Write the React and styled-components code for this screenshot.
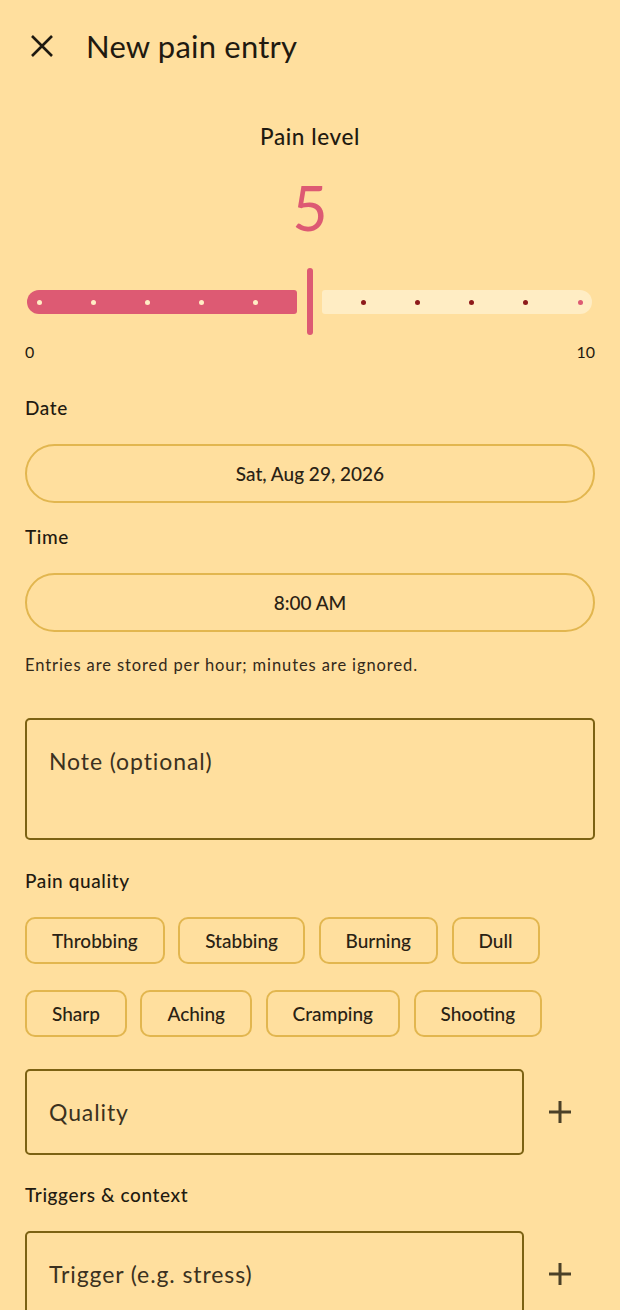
import styled, { createGlobalStyle } from 'styled-components';

const GlobalStyle = createGlobalStyle`
	html, body {
		margin: 0;
		padding: 0;
		background: #ffdf9e;
	}
	body {
		font-family: Lato, "Noto Sans", sans-serif;
		color: #1f1a10;
	}
	* {
		box-sizing: border-box;
	}
`;

const QUALITIES = [
	['Throbbing', 'Stabbing', 'Burning', 'Dull'],
	['Sharp', 'Aching', 'Cramping', 'Shooting'],
];

const PAIN = 5;
const MAX = 10;

const Page = styled.div`
	width: 620px;
	height: 1310px;
	overflow: hidden;
	background: #ffdf9e;
`;

const Header = styled.header`
	display: flex;
	align-items: center;
	height: 92px;
	padding-left: 30px;
	gap: 32px;
`;

const Title = styled.h1`
	margin: 0;
	font-size: 31px;
	font-weight: 400;
	letter-spacing: 0.2px;
	color: #1f1a10;
`;

const Content = styled.main`
	padding: 0 25px;
	display: flex;
	flex-direction: column;
`;

const LevelTitle = styled.div`
	margin-top: 33px;
	text-align: center;
	font-size: 22.5px;
	font-weight: 500;
	letter-spacing: 0.6px;
	line-height: 24px;
`;

const LevelValue = styled.div`
	margin-top: 29px;
	text-align: center;
	font-size: 61px;
	line-height: 60px;
	color: #dd5a73;
	font-weight: 400;
`;

const Slider = styled.div`
	position: relative;
	margin: 30px 3px 0 2px;
	height: 67px;
`;

const Track = styled.div`
	position: absolute;
	top: 22px;
	height: 24px;
	background: ${({ $active }) => ($active ? '#dd5a73' : '#ffedc4')};
	border-radius: ${({ $active }) => ($active ? '12px 3px 3px 12px' : '3px 12px 12px 3px')};
`;

const Dot = styled.span`
	position: absolute;
	top: 32px;
	width: 5px;
	height: 5px;
	margin-left: -2.5px;
	border-radius: 50%;
	background: ${({ $tone }) => $tone};
`;

const Thumb = styled.div`
	position: absolute;
	top: 0;
	width: 6px;
	height: 67px;
	margin-left: -3px;
	border-radius: 3px;
	background: #dd5a73;
`;

const Scale = styled.div`
	display: flex;
	justify-content: space-between;
	margin-top: 8px;
	font-size: 16px;
	line-height: 18px;
`;

const Label = styled.div`
	font-size: 19px;
	font-weight: 500;
	letter-spacing: 0.6px;
	line-height: 22px;
	margin-top: ${({ $top }) => $top}px;
`;

const PillButton = styled.button`
	margin-top: 25px;
	height: 59px;
	width: 100%;
	border: 2px solid #e2b64f;
	border-radius: 30px;
	background: transparent;
	font-family: inherit;
	font-size: 19px;
	font-weight: 500;
	color: #2a2214;
`;

const Hint = styled.p`
	margin: 24px 0 0;
	font-size: 16.5px;
	letter-spacing: 0.9px;
	line-height: 18px;
	color: #33291a;
`;

const NoteBox = styled.div`
	margin-top: 44px;
	height: 122px;
	border: 2px solid #7c6213;
	border-radius: 5px;
	padding: 27px 22px;
	font-size: 23px;
	letter-spacing: 0.9px;
	color: #3b3120;
`;

const ChipRows = styled.div`
	display: flex;
	flex-direction: column;
	gap: 26px;
	margin-top: 25px;
`;

const ChipRow = styled.div`
	display: flex;
	gap: 13.5px;
`;

const Chip = styled.button`
	height: 47px;
	padding: 0 25px;
	border: 2px solid #e2b64f;
	border-radius: 10px;
	background: transparent;
	font-family: inherit;
	font-size: 19px;
	font-weight: 500;
	color: #2a2214;
`;

const InputRow = styled.div`
	display: flex;
	align-items: center;
	margin-top: ${({ $top }) => $top}px;
`;

const Field = styled.div`
	width: 499px;
	height: 86px;
	flex-shrink: 0;
	border: 2px solid #7c6213;
	border-radius: 5px;
	padding: 0 22px;
	display: flex;
	align-items: center;
	font-size: 23px;
	letter-spacing: 0.9px;
	color: #3b3120;
`;

const AddButton = styled.button`
	margin-left: 24px;
	width: 24px;
	height: 24px;
	padding: 0;
	border: none;
	background: transparent;
	display: flex;
	align-items: center;
	justify-content: center;
`;

const CloseIcon = () => (
	<svg width="24" height="24" viewBox="0 0 24 24">
		<path d="M2 2 L22 22 M22 2 L2 22" stroke="#1f1a10" strokeWidth="2.6" fill="none" />
	</svg>
);

const PlusIcon = () => (
	<svg width="24" height="24" viewBox="0 0 24 24">
		<path d="M12 1 V23 M1 12 H23" stroke="#4b4027" strokeWidth="3" fill="none" />
	</svg>
);

const PainSlider = ({ value, max }) => {
	const width = 565;
	const edge = 12;
	const step = (width - edge * 2) / max;
	const thumbX = edge + value * step;

	return (
		<Slider>
			<Track $active style={{ left: 0, width: thumbX - 13 }} />
			<Track style={{ left: thumbX + 12, right: 0 }} />
			{Array.from({ length: max + 1 }, (_, i) => i)
				.filter((i) => i !== value)
				.map((i) => (
					<Dot
						key={i}
						style={{ left: edge + i * step }}
						$tone={i < value ? '#ffedc4' : i === max ? '#dd5a73' : '#8e1a1a'}
					/>
				))}
			<Thumb style={{ left: thumbX }} />
		</Slider>
	);
};

export default function App() {
	return (
		<Page>
			<GlobalStyle />
			<Header>
				<CloseIcon />
				<Title>New pain entry</Title>
			</Header>
			<Content>
				<LevelTitle>Pain level</LevelTitle>
				<LevelValue>{PAIN}</LevelValue>
				<PainSlider value={PAIN} max={MAX} />
				<Scale>
					<span>0</span>
					<span>10</span>
				</Scale>

				<Label $top={36}>Date</Label>
				<PillButton>Sat, Aug 29, 2026</PillButton>

				<Label $top={23}>Time</Label>
				<PillButton>8:00 AM</PillButton>

				<Hint>Entries are stored per hour; minutes are ignored.</Hint>

				<NoteBox>Note (optional)</NoteBox>

				<Label $top={30}>Pain quality</Label>
				<ChipRows>
					{QUALITIES.map((row, i) => (
						<ChipRow key={i}>
							{row.map((q) => (
								<Chip key={q}>{q}</Chip>
							))}
						</ChipRow>
					))}
				</ChipRows>

				<InputRow $top={32}>
					<Field>Quality</Field>
					<AddButton>
						<PlusIcon />
					</AddButton>
				</InputRow>

				<Label $top={29}>Triggers &amp; context</Label>
				<InputRow $top={25}>
					<Field>Trigger (e.g. stress)</Field>
					<AddButton>
						<PlusIcon />
					</AddButton>
				</InputRow>
			</Content>
		</Page>
	);
}
